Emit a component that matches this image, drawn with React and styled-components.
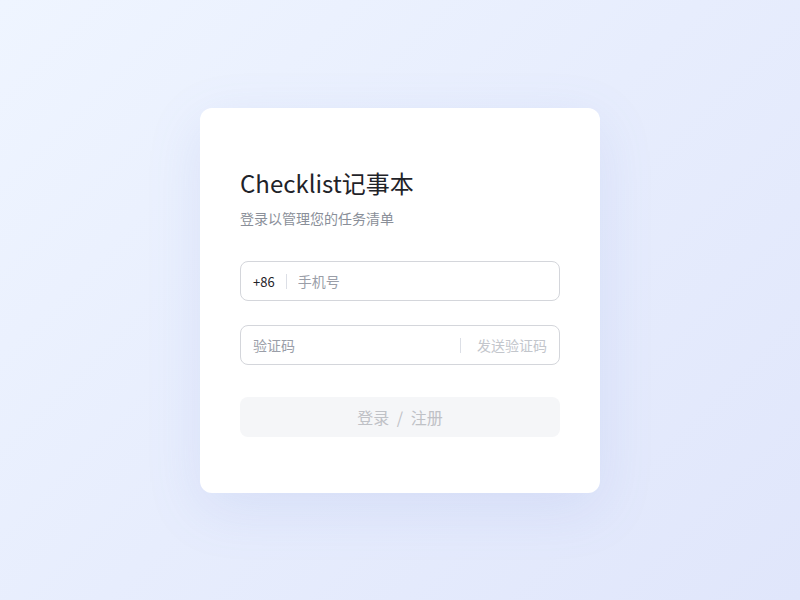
import React from "react";
import styled, { createGlobalStyle } from "styled-components";

const GlobalStyle = createGlobalStyle`
  html, body, #root {
    margin: 0;
    height: 100%;
  }

  body {
    font-family: "Noto Sans CJK SC", "Noto Sans", sans-serif;
    background: linear-gradient(135deg, #eff5ff 0%, #e7edfd 50%, #e0e6fb 100%);
  }
`;

const StyledPage = styled.div`
  height: 100%;
  display: flex;
  justify-content: center;
  align-items: flex-start;
  padding-top: 108px;
  box-sizing: border-box;
`;

const StyledCard = styled.div`
  width: 400px;
  box-sizing: border-box;
  padding: 58px 40px 56px;
  background: #ffffff;
  border-radius: 12px;
  box-shadow: 0 16px 56px rgba(110, 130, 210, 0.13);
  display: flex;
  flex-direction: column;
`;

const StyledTitle = styled.h1`
  margin: 0;
  font-size: 24px;
  line-height: 34px;
  font-weight: 400;
  color: #1f2329;
`;

const StyledSubtitle = styled.p`
  margin: 8px 0 33px;
  font-size: 14px;
  line-height: 20px;
  color: #8a8f99;
`;

const StyledField = styled.div`
  height: 40px;
  box-sizing: border-box;
  border: 1px solid #d4d6db;
  border-radius: 8px;
  padding: 0 12px;
  display: flex;
  align-items: center;
  margin-bottom: ${(p) => p.$gap || 0}px;
`;

const StyledPrefix = styled.span`
  font-size: 13px;
  color: #1f2329;
`;

const StyledDivider = styled.span`
  width: 1px;
  height: 15px;
  background: #dcdfe6;
  margin: 0 ${(p) => p.$space}px;
`;

const StyledInput = styled.input`
  flex: 1;
  min-width: 0;
  border: none;
  outline: none;
  padding: 0;
  background: transparent;
  font: inherit;
  font-size: 14px;
  color: #1f2329;

  &::placeholder {
    color: #9a9ea8;
  }
`;

const StyledSend = styled.span`
  font-size: 14px;
  color: #c3c6cc;
`;

const StyledSubmit = styled.button`
  height: 40px;
  border: none;
  border-radius: 8px;
  background: #f5f6f8;
  font: inherit;
  font-size: 16px;
  color: #bfc1c6;
  word-spacing: 4px;
`;

const App = () => {
  return (
    <>
      <GlobalStyle />
      <StyledPage>
        <StyledCard>
          <StyledTitle>Checklist记事本</StyledTitle>
          <StyledSubtitle>登录以管理您的任务清单</StyledSubtitle>
          <StyledField $gap={24}>
            <StyledPrefix>+86</StyledPrefix>
            <StyledDivider $space={11} />
            <StyledInput placeholder="手机号" />
          </StyledField>
          <StyledField $gap={32}>
            <StyledInput placeholder="验证码" />
            <StyledDivider $space={16} />
            <StyledSend>发送验证码</StyledSend>
          </StyledField>
          <StyledSubmit disabled>登录 / 注册</StyledSubmit>
        </StyledCard>
      </StyledPage>
    </>
  );
};

export default App;
